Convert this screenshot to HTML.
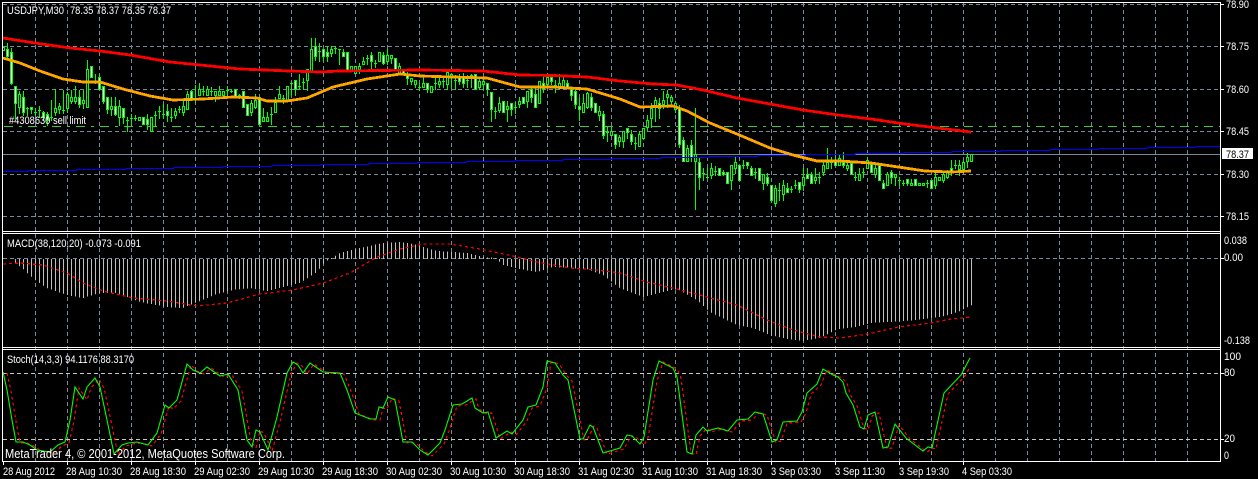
<!DOCTYPE html>
<html>
<head>
<meta charset="utf-8">
<title>USDJPY,M30</title>
<style>
html,body{margin:0;padding:0;background:#000;width:1258px;height:479px;overflow:hidden}
svg{display:block;position:absolute;left:0;top:0}
text{font-family:"Liberation Sans",sans-serif;font-size:11px;fill:#fff}
</style>
</head>
<body>
<svg width="1258" height="479" viewBox="0 0 1258 479" xmlns="http://www.w3.org/2000/svg">
<defs>
<pattern id="bars" patternUnits="userSpaceOnUse" x="0" y="0" width="4" height="10"><rect x="3" y="0" width="1" height="10" fill="#c0c0c0"/></pattern>
</defs>
<rect width="1258" height="479" fill="#000"/>
<g shape-rendering="crispEdges">
<!-- vertical grid -->
<path fill="none" stroke="#778899" stroke-dasharray="4 3" d="M35.5 3V461M67.5 3V461M99.5 3V461M131.5 3V461M163.5 3V461M195.5 3V461M227.5 3V461M259.5 3V461M291.5 3V461M323.5 3V461M355.5 3V461M387.5 3V461M419.5 3V461M451.5 3V461M483.5 3V461M515.5 3V461M547.5 3V461M579.5 3V461M611.5 3V461M643.5 3V461M675.5 3V461M707.5 3V461M739.5 3V461M771.5 3V461M803.5 3V461M835.5 3V461M867.5 3V461M899.5 3V461M931.5 3V461M963.5 3V461M995.5 3V461M1027.5 3V461M1059.5 3V461M1091.5 3V461M1123.5 3V461M1155.5 3V461M1187.5 3V461"/>
<!-- horizontal grid -->
<path fill="none" stroke="#778899" stroke-dasharray="4 3" d="M3 4.5H1220M3 46.5H1220M3 89.5H1220M3 131.5H1220M3 174.5H1220M3 216.5H1220M3 258.5H1220"/>
<path fill="none" stroke="#c8c8c8" stroke-dasharray="4 3" d="M3 373.5H1220M3 439.5H1220"/>
<!-- order line -->
<path fill="none" stroke="#32cd32" stroke-dasharray="9 6 3 6" d="M4 126.5H1220"/>
<!-- bid line -->
<path fill="none" stroke="#778899" d="M3 154.5H1220"/>
<!-- wicks -->
<path fill="none" stroke="#00ff00" d="M3.5 47V51M7.5 43V58M11.5 48V85M15.5 86V119M19.5 91V114M23.5 91V116M27.5 107V116M31.5 107V114M35.5 108V116M39.5 106V118M43.5 111V121M47.5 112V126M51.5 100V121M55.5 89V116M59.5 103V114M63.5 90V114M67.5 92V113M71.5 90V104M75.5 86V104M79.5 90V108M83.5 90V109M87.5 60V108M91.5 66V78M95.5 74V84M99.5 74V90M103.5 86V104M107.5 97V114M111.5 97V116M115.5 97V116M119.5 100V126M123.5 108V124M127.5 117V132M131.5 114V126M135.5 115V121M139.5 117V121M143.5 117V125M147.5 114V130M151.5 117V132M155.5 111V126M159.5 106V119M163.5 104V119M167.5 104V122M171.5 108V122M175.5 108V119M179.5 106V113M183.5 100V116M187.5 91V110M191.5 90V101M195.5 85V103M199.5 83V96M203.5 86V96M207.5 86V96M211.5 87V96M215.5 91V102M219.5 86V96M223.5 91V96M227.5 86V96M231.5 89V93M235.5 89V97M239.5 94V99M243.5 91V108M247.5 104V116M251.5 100V116M255.5 94V109M259.5 97V125M263.5 108V122M267.5 112V122M271.5 107V125M275.5 97V113M279.5 86V99M283.5 95V104M287.5 86V101M291.5 82V96M295.5 80V96M299.5 74V90M303.5 78V90M307.5 69V91M311.5 38V72M315.5 38V61M319.5 43V62M323.5 49V61M327.5 46V62M331.5 46V57M335.5 46V54M339.5 49V65M343.5 49V57M347.5 52V71M351.5 66V71M355.5 66V74M359.5 63V74M363.5 57V65M367.5 55V65M371.5 52V70M375.5 60V68M379.5 52V62M383.5 52V65M387.5 49V65M391.5 55V64M395.5 58V70M399.5 63V74M403.5 69V75M407.5 72V85M411.5 78V85M415.5 80V88M419.5 83V91M423.5 77V88M427.5 83V93M431.5 86V93M435.5 77V90M439.5 77V88M443.5 78V88M447.5 72V90M451.5 73V89M455.5 75V90M459.5 74V85M463.5 73V88M467.5 75V88M471.5 74V88M475.5 74V90M479.5 78V90M483.5 78V90M487.5 83V96M491.5 92V122M495.5 107V119M499.5 97V113M503.5 101V113M507.5 101V122M511.5 103V116M515.5 102V114M519.5 97V108M523.5 97V104M527.5 91V108M531.5 88V103M535.5 88V108M539.5 81V104M543.5 77V93M547.5 74V89M551.5 74V85M555.5 80V93M559.5 74V89M563.5 77V88M567.5 80V89M571.5 88V101M575.5 88V109M579.5 98V121M583.5 94V113M587.5 92V109M591.5 93V111M595.5 103V113M599.5 106V121M603.5 111V139M607.5 127V142M611.5 127V136M615.5 134V149M619.5 135V147M623.5 131V148M627.5 128V139M631.5 130V145M635.5 137V150M639.5 131V147M643.5 128V139M647.5 115V131M651.5 103V128M655.5 97V122M659.5 98V119M663.5 91V109M667.5 90V108M671.5 95V105M675.5 103V113M679.5 105V148M683.5 137V162M687.5 145V162M691.5 140V162M695.5 108V210M699.5 158V190M703.5 168V181M707.5 168V179M711.5 163V179M715.5 166V176M719.5 168V176M723.5 170V176M727.5 172V184M731.5 165V190M735.5 157V174M739.5 165V181M743.5 160V169M747.5 162V169M751.5 166V176M755.5 168V179M759.5 168V181M763.5 174V190M767.5 173V186M771.5 185V203M775.5 185V207M779.5 183V201M783.5 180V201M787.5 183V193M791.5 186V193M795.5 180V189M799.5 182V193M803.5 168V191M807.5 168V179M811.5 172V184M815.5 168V184M819.5 172V184M823.5 160V176M827.5 148V169M831.5 157V169M835.5 154V166M839.5 154V166M843.5 152V168M847.5 163V171M851.5 163V175M855.5 172V181M859.5 168V181M863.5 168V178M867.5 157V169M871.5 162V173M875.5 163V178M879.5 165V181M883.5 180V189M887.5 172V186M891.5 170V184M895.5 174V186M899.5 177V186M903.5 180V186M907.5 179V186M911.5 179V186M915.5 179V186M919.5 183V186M923.5 183V186M927.5 180V188M931.5 180V189M935.5 173V189M939.5 177V181M943.5 172V183M947.5 170V179M951.5 160V176M955.5 160V169M959.5 160V176M963.5 160V171M967.5 153V168M971.5 154V162"/>
<!-- bodies -->
<path fill="none" stroke="#00ff00" stroke-width="3" d="M3.5 47V51M7.5 49V57M11.5 52V84M15.5 86V104M19.5 94V108M23.5 97V113M27.5 108V109M31.5 107V110M35.5 112V113M39.5 110V111M43.5 112V118M47.5 114V121M51.5 117V118M55.5 108V113M59.5 106V110M63.5 110V111M67.5 94V109M71.5 97V102M75.5 97V102M79.5 97V105M83.5 100V104M87.5 69V108M91.5 66V78M95.5 81V82M99.5 77V90M103.5 86V102M107.5 97V110M111.5 106V110M115.5 106V115M119.5 106V118M123.5 108V118M127.5 120V121M131.5 118V119M135.5 118V119M139.5 117V121M143.5 117V125M147.5 119V125M151.5 117V132M155.5 115V116M159.5 111V112M163.5 114V115M167.5 111V116M171.5 117V118M175.5 111V116M179.5 109V110M183.5 106V113M187.5 94V110M191.5 91V100M195.5 98V99M199.5 89V96M203.5 91V92M207.5 89V96M211.5 91V92M215.5 91V96M219.5 91V96M223.5 91V96M227.5 90V91M231.5 91V92M235.5 89V97M239.5 95V96M243.5 91V108M247.5 104V116M251.5 103V113M255.5 100V108M259.5 97V125M263.5 117V122M267.5 117V122M271.5 114V115M275.5 102V113M279.5 94V99M283.5 98V99M287.5 86V101M291.5 83V84M295.5 80V90M299.5 86V87M303.5 82V83M307.5 69V81M311.5 49V72M315.5 46V57M319.5 51V52M323.5 49V57M327.5 52V57M331.5 49V54M335.5 48V49M339.5 49V50M343.5 52V57M347.5 52V71M351.5 66V71M355.5 66V74M359.5 66V70M363.5 61V65M367.5 58V59M371.5 55V62M375.5 63V64M379.5 52V62M383.5 55V64M387.5 55V62M391.5 55V59M395.5 58V70M399.5 66V74M403.5 69V75M407.5 74V79M411.5 78V82M415.5 80V85M419.5 87V88M423.5 83V88M427.5 83V90M431.5 86V93M435.5 83V84M439.5 81V85M443.5 81V82M447.5 72V85M451.5 74V77M455.5 80V81M459.5 77V82M463.5 77V84M467.5 80V81M471.5 75V76M475.5 74V90M479.5 81V88M483.5 81V85M487.5 83V90M491.5 92V110M495.5 111V112M499.5 103V111M503.5 101V113M507.5 106V110M511.5 103V110M515.5 107V108M519.5 101V105M523.5 97V104M527.5 91V102M531.5 89V98M535.5 94V108M539.5 81V104M543.5 83V89M547.5 77V85M551.5 77V82M555.5 85V86M559.5 83V89M563.5 80V87M567.5 83V88M571.5 89V96M575.5 91V105M579.5 106V110M583.5 103V113M587.5 93V108M591.5 97V108M595.5 103V113M599.5 111V116M603.5 114V136M607.5 132V133M611.5 131V136M615.5 134V145M619.5 137V142M623.5 131V142M627.5 128V133M631.5 134V142M635.5 143V144M639.5 134V147M643.5 128V139M647.5 120V128M651.5 108V119M655.5 100V108M659.5 103V109M663.5 100V105M667.5 94V98M671.5 97V102M675.5 103V110M679.5 108V145M683.5 140V162M687.5 148V162M691.5 145V158M695.5 154V162M699.5 162V178M703.5 173V174M707.5 177V178M711.5 168V176M715.5 171V172M719.5 168V176M723.5 172V175M727.5 172V184M731.5 165V181M735.5 162V169M739.5 165V181M743.5 165V166M747.5 162V166M751.5 168V176M755.5 172V173M759.5 168V181M763.5 174V184M767.5 177V184M771.5 185V201M775.5 188V204M779.5 190V191M783.5 185V195M787.5 188V193M791.5 189V190M795.5 185V186M799.5 182V190M803.5 177V186M807.5 174V179M811.5 174V184M815.5 177V181M819.5 177V178M823.5 165V173M827.5 162V169M831.5 162V163M835.5 161V166M839.5 158V166M843.5 162V166M847.5 165V169M851.5 163V175M855.5 177V178M859.5 174V181M863.5 172V173M867.5 160V169M871.5 164V173M875.5 168V175M879.5 165V181M883.5 183V189M887.5 174V186M891.5 172V178M895.5 174V178M899.5 180V181M903.5 183V184M907.5 179V184M911.5 183V186M915.5 179V186M919.5 183V186M923.5 183V186M927.5 183V184M931.5 180V189M935.5 177V186M939.5 177V181M943.5 174V181M947.5 172V178M951.5 168V173M955.5 165V166M959.5 165V170M963.5 162V170M967.5 157V162M971.5 154V162"/>
<!-- white centres (bear) -->
<path fill="none" stroke="#ffffff" d="M7.5 50V56M11.5 53V83M15.5 87V103M23.5 98V112M31.5 108V109M43.5 113V117M47.5 115V120M79.5 98V104M91.5 67V77M99.5 78V89M103.5 87V101M107.5 98V109M115.5 107V114M123.5 109V117M143.5 118V124M147.5 120V124M167.5 112V115M191.5 92V99M235.5 90V96M243.5 92V107M247.5 105V115M259.5 98V124M295.5 81V89M315.5 47V56M323.5 50V56M327.5 53V56M343.5 53V56M347.5 53V70M371.5 56V61M383.5 56V63M395.5 59V69M403.5 70V74M407.5 75V78M427.5 84V89M459.5 78V81M463.5 78V83M475.5 75V89M487.5 84V89M491.5 93V109M503.5 102V112M511.5 104V109M523.5 98V103M531.5 90V97M535.5 95V107M543.5 84V88M551.5 78V81M567.5 84V87M571.5 90V95M575.5 92V104M579.5 107V109M591.5 98V107M595.5 104V112M603.5 115V135M615.5 135V144M627.5 129V132M631.5 135V141M659.5 104V108M679.5 109V144M683.5 141V161M691.5 146V157M699.5 163V177M719.5 169V175M723.5 173V174M727.5 173V183M739.5 166V180M747.5 163V165M751.5 169V175M759.5 169V180M767.5 178V183M771.5 186V200M787.5 189V192M799.5 183V189M807.5 175V178M811.5 175V183M835.5 162V165M843.5 163V165M851.5 164V174M871.5 165V172M879.5 166V180M883.5 184V188M891.5 173V177M907.5 180V183M915.5 180V185M931.5 181V188M951.5 169V172"/>
<!-- black centres (bull) -->
<path fill="none" stroke="#000000" d="M3.5 48V50M19.5 95V107M55.5 109V112M59.5 107V109M67.5 95V108M71.5 98V101M75.5 98V101M83.5 101V103M87.5 70V107M111.5 107V109M119.5 107V117M139.5 118V120M151.5 118V131M175.5 112V115M183.5 107V112M187.5 95V109M199.5 90V95M207.5 90V95M215.5 92V95M219.5 92V95M223.5 92V95M251.5 104V112M255.5 101V107M263.5 118V121M267.5 118V121M275.5 103V112M279.5 95V98M287.5 87V100M307.5 70V80M311.5 50V71M331.5 50V53M351.5 67V70M355.5 67V73M359.5 67V69M363.5 62V64M379.5 53V61M387.5 56V61M391.5 56V58M399.5 67V73M411.5 79V81M415.5 81V84M423.5 84V87M431.5 87V92M439.5 82V84M447.5 73V84M451.5 75V76M479.5 82V87M483.5 82V84M499.5 104V110M507.5 107V109M519.5 102V104M527.5 92V101M539.5 82V103M547.5 78V84M559.5 84V88M563.5 81V86M583.5 104V112M587.5 94V107M599.5 112V115M611.5 132V135M619.5 138V141M623.5 132V141M639.5 135V146M643.5 129V138M647.5 121V127M651.5 109V118M655.5 101V107M663.5 101V104M667.5 95V97M671.5 98V101M675.5 104V109M687.5 149V161M695.5 155V161M711.5 169V175M731.5 166V180M735.5 163V168M763.5 175V183M775.5 189V203M783.5 186V194M803.5 178V185M815.5 178V180M823.5 166V172M827.5 163V168M839.5 159V165M847.5 166V168M859.5 175V180M867.5 161V168M875.5 169V174M887.5 175V185M895.5 175V177M911.5 184V185M919.5 184V185M923.5 184V185M935.5 178V185M939.5 178V180M943.5 175V180M947.5 173V177M959.5 166V169M963.5 163V169M967.5 158V161M971.5 155V161"/>
<!-- blue line -->
<path fill="none" stroke="#0000ff" d="M3 171.5H28V170.5H77V169.5H126V168.5H174V167.5H223V166.5H272V165.5H320V164.5H369V163.5H417V162.5H466V161.5H515V160.5H563V159.5H612V158.5H661V157.5H709V156.5H758V155.5H806V154.5H855V153.5H904V152.5H952V151.5H1001V150.5H1050V149.5H1098V148.5H1147V147.5H1196V146.5H1220"/>
<!-- red MA -->
<path fill="none" stroke="#ff0000" stroke-width="2.8" d="M3 38L35 43L70 48L100 51L130 55L170 62L200 65L240 69L290 71L320 72L340 71L420 70L483 71L520 75L553 75.5L587 77L620 81L653 84L677 85L703 90L737 98L770 104L803 110L838 115L871 119L905 124L938 128L971 132"/>
<!-- orange MA -->
<path fill="none" stroke="#ffa500" stroke-width="2.8" d="M3 58L20 63L40 71L63 79L83 82L100 82L123 89L150 96L173 100L203 99L233 97L257 98L267 101L287 101L307 98L333 87L367 79L400 74L420 76L453 77L487 78L520 87L553 87L587 89L620 99L640 107L673 106L687 111L710 123L737 134L770 148L793 155L817 161L840 161L871 163L905 168L925 171L951 172L971 171"/>
<!-- MACD histogram -->
<path fill="url(#bars)" d="M11 258L15 263L23 269L35 280L47 288L67 295L83 298L100 293L117 293L140 302L167 307L183 308L200 301L217 294L233 290L250 288L267 291L283 287L300 283L317 272L325 262L330 259L340 253L360 248L383 243L400 242L420 245L423 247L437 251L453 252L467 253L483 257L495 258L503 265L520 269L537 272L553 267L587 269L603 275L620 288L643 297L663 292L677 289L697 300L710 312L737 325L753 328L770 335L787 339L803 341L820 338L838 329L855 327L871 323L905 321L925 319L945 316L958 312L972 305L972 259L11 259Z"/>
<!-- MACD signal -->
<path fill="none" stroke="#ff0000" stroke-width="1.2" stroke-dasharray="3 3" d="M3 264L20 263L43 265L67 273L83 283L103 291L133 298L167 301L197 306L227 303L260 294L293 290L323 283L350 273L377 257L400 249L423 244L450 244L480 249L513 256L537 262L570 268L597 270L620 273L647 282L677 289L707 297L737 305L767 320L793 330L820 337L840 338L868 334L898 327L931 323L951 319L971 317"/>
</g>
<!-- Stochastic -->
<path fill="none" stroke="#ff0000" stroke-width="1.2" stroke-dasharray="3 3" shape-rendering="crispEdges" transform="translate(4 1)" d="M3 372L7 390L12 420L16 442L23 442L30 445L37 450L50 452L58 445L65 442L70 420L75 387L83 399L87 387L95 378L100 387L107 420L114 454L122 445L128 443L137 442L148 445L157 433L165 405L169 408L177 400L187 364L193 370L200 373L207 367L220 376L228 374L238 390L247 440L252 447L256 430L260 432L268 450L277 417L287 373L293 362L298 365L303 373L310 363L323 372L340 373L347 390L355 413L370 419L376 419L379 407L383 408L388 397L395 400L403 442L412 442L420 450L428 455L440 443L445 430L453 405L462 404L472 398L475 408L483 413L488 412L496 438L507 431L512 434L523 420L528 407L536 405L543 387L547 361L555 363L563 375L568 380L580 439L583 439L590 425L593 427L603 453L620 448L627 435L632 436L640 444L644 437L653 380L659 361L673 368L677 377L687 452L692 454L696 435L703 427L707 431L718 428L728 431L737 420L748 419L755 412L763 414L772 442L777 440L783 422L797 421L802 412L807 393L817 384L823 369L833 375L838 377L843 382L846 393L853 405L860 427L864 429L868 415L875 412L883 448L888 447L895 424L906 438L923 451L928 447L932 448L944 393L961 375L966 366"/>
<path fill="none" stroke="#00ff00" stroke-width="1.1" d="M3 372L7 390L12 420L16 442L23 442L30 445L37 450L50 452L58 445L65 442L70 420L75 387L83 399L87 387L95 378L100 387L107 420L114 454L122 445L128 443L137 442L148 445L157 433L165 405L169 408L177 400L187 364L193 370L200 373L207 367L220 376L228 374L238 390L247 440L252 447L256 430L260 432L268 450L277 417L287 373L293 362L298 365L303 373L310 363L323 372L340 373L347 390L355 413L370 419L376 419L379 407L383 408L388 397L395 400L403 442L412 442L420 450L428 455L440 443L445 430L453 405L462 404L472 398L475 408L483 413L488 412L496 438L507 431L512 434L523 420L528 407L536 405L543 387L547 361L555 363L563 375L568 380L580 439L583 439L590 425L593 427L603 453L620 448L627 435L632 436L640 444L644 437L653 380L659 361L673 368L677 377L687 452L692 454L696 435L703 427L707 431L718 428L728 431L737 420L748 419L755 412L763 414L772 442L777 440L783 422L797 421L802 412L807 393L817 384L823 369L833 375L838 377L843 382L846 393L853 405L860 427L864 429L868 415L875 412L883 448L888 447L895 424L906 438L923 451L928 447L932 448L944 393L961 375L970 358"/>
<!-- frame -->
<g shape-rendering="crispEdges" fill="#fff">
<rect x="2" y="2" width="1219" height="1"/>
<rect x="2" y="231" width="1219" height="1"/>
<rect x="2" y="233" width="1219" height="1"/>
<rect x="2" y="347" width="1219" height="1"/>
<rect x="2" y="349" width="1219" height="1"/>
<rect x="2" y="461" width="1219" height="1"/>
<rect x="2" y="2" width="1" height="460"/>
<rect x="1220" y="2" width="1" height="460"/>
<path d="M3 462h1v3h-1zM67 462h1v3h-1zM131 462h1v3h-1zM195 462h1v3h-1zM259 462h1v3h-1zM323 462h1v3h-1zM387 462h1v3h-1zM451 462h1v3h-1zM515 462h1v3h-1zM579 462h1v3h-1zM643 462h1v3h-1zM707 462h1v3h-1zM771 462h1v3h-1zM835 462h1v3h-1zM899 462h1v3h-1zM963 462h1v3h-1zM1221 4h3v1h-3zM1221 46h3v1h-3zM1221 89h3v1h-3zM1221 131h3v1h-3zM1221 174h3v1h-3zM1221 216h3v1h-3zM1221 258h3v1h-3zM1221 373h3v1h-3zM1221 439h3v1h-3z"/>
<rect x="1222" y="148" width="31" height="11"/>
</g>
<!-- labels -->
<text x="7" y="14" textLength="57" lengthAdjust="spacingAndGlyphs">USDJPY,M30</text>
<text x="70" y="14" textLength="101" lengthAdjust="spacingAndGlyphs">78.35 78.37 78.35 78.37</text>
<text x="9" y="124" textLength="77" lengthAdjust="spacingAndGlyphs">#4308630 sell limit</text>
<text x="7" y="247" textLength="134" lengthAdjust="spacingAndGlyphs">MACD(38,120,20) -0.073 -0.091</text>
<text x="7" y="363" textLength="127" lengthAdjust="spacingAndGlyphs">Stoch(14,3,3) 94.1176 88.3170</text>
<text x="5" y="458" textLength="280" lengthAdjust="spacingAndGlyphs" style="font-size:12.5px">MetaTrader 4, © 2001-2012, MetaQuotes Software Corp.</text>
<text x="3" y="475" textLength="52" lengthAdjust="spacingAndGlyphs">28 Aug 2012</text>
<text x="66" y="475" textLength="56" lengthAdjust="spacingAndGlyphs">28 Aug 10:30</text>
<text x="130" y="475" textLength="56" lengthAdjust="spacingAndGlyphs">28 Aug 18:30</text>
<text x="194" y="475" textLength="56" lengthAdjust="spacingAndGlyphs">29 Aug 02:30</text>
<text x="258" y="475" textLength="56" lengthAdjust="spacingAndGlyphs">29 Aug 10:30</text>
<text x="322" y="475" textLength="56" lengthAdjust="spacingAndGlyphs">29 Aug 18:30</text>
<text x="386" y="475" textLength="56" lengthAdjust="spacingAndGlyphs">30 Aug 02:30</text>
<text x="450" y="475" textLength="56" lengthAdjust="spacingAndGlyphs">30 Aug 10:30</text>
<text x="514" y="475" textLength="56" lengthAdjust="spacingAndGlyphs">30 Aug 18:30</text>
<text x="578" y="475" textLength="56" lengthAdjust="spacingAndGlyphs">31 Aug 02:30</text>
<text x="642" y="475" textLength="56" lengthAdjust="spacingAndGlyphs">31 Aug 10:30</text>
<text x="706" y="475" textLength="56" lengthAdjust="spacingAndGlyphs">31 Aug 18:30</text>
<text x="771" y="475" textLength="50" lengthAdjust="spacingAndGlyphs">3 Sep 03:30</text>
<text x="835" y="475" textLength="50" lengthAdjust="spacingAndGlyphs">3 Sep 11:30</text>
<text x="899" y="475" textLength="50" lengthAdjust="spacingAndGlyphs">3 Sep 19:30</text>
<text x="962" y="475" textLength="50" lengthAdjust="spacingAndGlyphs">4 Sep 03:30</text>
<text x="1226" y="8" textLength="23" lengthAdjust="spacingAndGlyphs">78.90</text>
<text x="1226" y="50" textLength="23" lengthAdjust="spacingAndGlyphs">78.75</text>
<text x="1226" y="93" textLength="23" lengthAdjust="spacingAndGlyphs">78.60</text>
<text x="1226" y="135" textLength="23" lengthAdjust="spacingAndGlyphs">78.45</text>
<text x="1226" y="178" textLength="23" lengthAdjust="spacingAndGlyphs">78.30</text>
<text x="1226" y="220" textLength="23" lengthAdjust="spacingAndGlyphs">78.15</text>
<text x="1226" y="158" textLength="23" lengthAdjust="spacingAndGlyphs" style="fill:#000">78.37</text>
<text x="1224" y="244" textLength="23" lengthAdjust="spacingAndGlyphs">0.038</text>
<text x="1224" y="261" textLength="19" lengthAdjust="spacingAndGlyphs">0.00</text>
<text x="1224" y="344" textLength="26" lengthAdjust="spacingAndGlyphs">-0.138</text>
<text x="1224" y="360" textLength="17" lengthAdjust="spacingAndGlyphs">100</text>
<text x="1224" y="376" textLength="11" lengthAdjust="spacingAndGlyphs">80</text>
<text x="1224" y="442" textLength="11" lengthAdjust="spacingAndGlyphs">20</text>
<text x="1224" y="459" textLength="5" lengthAdjust="spacingAndGlyphs">0</text>
</svg>
</body>
</html>
